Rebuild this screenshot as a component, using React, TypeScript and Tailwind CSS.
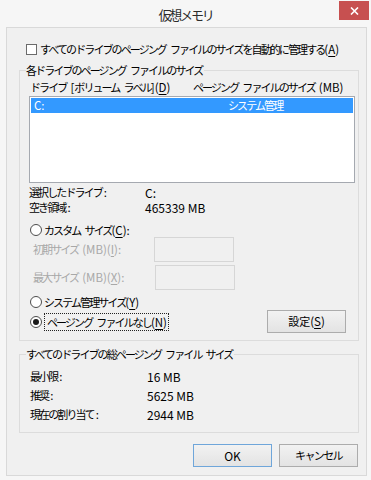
import React from "react";

// latin run: undo the tight CJK tracking
function L({ children }: { children: React.ReactNode }) {
  return <span className="text-[11.5px] tracking-normal">{children}</span>;
}

function Sp() {
  return <span className="inline-block w-[4px]" />;
}

function Colon() {
  return <span className="ml-[2px] text-[11.5px] tracking-normal">:</span>;
}

function Key({ k }: { k: string }) {
  return (
    <L>
      (<span className="underline underline-offset-2">{k}</span>)
    </L>
  );
}

function Radio({ checked }: { checked?: boolean }) {
  return (
    <span className="w-[12px] h-[12px] rounded-full border border-[#4d4d4d] bg-white flex items-center justify-center shrink-0">
      {checked && <span className="w-[6px] h-[6px] rounded-full bg-[#1a1a1a]" />}
    </span>
  );
}

function Btn({ children, primary }: { children: React.ReactNode; primary?: boolean }) {
  return (
    <div
      className={`w-[79px] h-[23px] flex items-center justify-center border bg-linear-to-b from-[#f2f2f2] to-[#e3e3e3] text-black ${
        primary ? "border-[#6fa6da]" : "border-[#acacac]"
      }`}
    >
      {children}
    </div>
  );
}

function Group({ label, children, className }: { label: React.ReactNode; children: React.ReactNode; className?: string }) {
  return (
    <div className={`relative border border-[#dcdcdc] ${className ?? ""}`}>
      <span className="absolute left-[6px] top-[-9px] h-[16px] leading-[16px] bg-[#f0f0f0] pr-[2px] text-black">
        {label}
      </span>
      {children}
    </div>
  );
}

export default function App() {
  return (
    <div className="w-[371px] h-[480px] bg-[#f6f6f6] flex flex-col font-['Noto_Sans_CJK_JP','Noto_Sans',sans-serif] text-[11px] tracking-[-1.9px] text-black whitespace-nowrap">
      {/* title bar */}
      <div className="relative h-[27px] flex items-center justify-center">
        <span className="text-[13px] tracking-[-2.2px] text-[#2b2b2b] leading-none mt-[1px]">仮想メモリ</span>
        <div className="absolute right-[2px] top-[1px] w-[30px] h-[19px] bg-[#c75050] flex items-center justify-center">
          <svg width="9" height="8" viewBox="0 0 9 8">
            <path d="M1 0.5 L8 7.5 M8 0.5 L1 7.5" stroke="#fff" strokeWidth="1.6" />
          </svg>
        </div>
      </div>

      {/* content */}
      <div className="ml-[6px] w-[361px] h-[449px] border border-[#d9d9d9] bg-[#f0f0f0] pl-[12px] pr-[7px] pt-[13px] flex flex-col">
        <div className="h-[16px] flex items-center ml-[7px]">
          <span className="w-[11px] h-[11px] border border-[#6b6b6b] bg-white shrink-0" />
          <span className="ml-[3px] leading-[16px]">
            すべてのドライブのページング
            <Sp />
            ファイルのサイズを自動的に管理する<Key k="A" />
          </span>
        </div>

        <Group
          label={
            <>
              各ドライブのページング
              <Sp />
              ファイルのサイズ
            </>
          }
          className="mt-[13px] pl-[9px] pr-[3px] pt-[8px] pb-[7px]"
        >
          <div className="h-[16px] flex items-center leading-[16px] ml-[1px]">
            <span className="w-[163px]">
              ドライブ
              <Sp />
              <L>[</L>ボリューム
              <Sp />
              ラベル<L>]</L>
              <Key k="D" />
            </span>
            <span>
              ページング
              <Sp />
              ファイルのサイズ
              <Sp />
              <L>(MB)</L>
            </span>
          </div>
          <div className="mt-[1px] h-[87px] border border-[#a5a9b0] bg-white p-[1px]">
            <div className="h-[15px] bg-[#3399ff] text-white flex items-center leading-[15px]">
              <span className="ml-[3px] w-[194px]">
                <L>C:</L>
              </span>
              <span>システム管理</span>
            </div>
          </div>

          <div className="mt-[2px] h-[15px] flex items-center leading-[15px]">
            <span className="w-[116px]">
              選択したドライブ
              <Colon />
            </span>
            <span className="text-[12px] tracking-normal">C:</span>
          </div>
          <div className="h-[15px] flex items-center leading-[15px]">
            <span className="w-[116px]">
              空き領域
              <Colon />
            </span>
            <span className="text-[12px] tracking-normal">465339 MB</span>
          </div>

          <div className="mt-[8px] h-[14px] flex items-center leading-[14px] ml-[1px]">
            <Radio />
            <span className="ml-[2px]">
              カスタム
              <Sp />
              サイズ<Key k="C" />
              <L>:</L>
            </span>
          </div>
          <div className="h-[25px] flex items-center text-[#a8a8a8] ml-[4px]">
            <span className="w-[121px]">
              初期サイズ
              <Sp />
              <L>(MB)</L>
              <Key k="I" />
              <L>:</L>
            </span>
            <span className="w-[80px] h-[25px] border border-[#d6d6d6] bg-[#f0f0f0]" />
          </div>
          <div className="mt-[3px] h-[25px] flex items-center text-[#a8a8a8] ml-[4px]">
            <span className="w-[122px]">
              最大サイズ
              <Sp />
              <L>(MB)</L>
              <Key k="X" />
              <L>:</L>
            </span>
            <span className="w-[80px] h-[25px] border border-[#d6d6d6] bg-[#f0f0f0]" />
          </div>

          <div className="mt-[4px] h-[16px] flex items-center leading-[16px] ml-[1px]">
            <Radio />
            <span className="ml-[2px]">
              システム管理サイズ<Key k="Y" />
            </span>
          </div>
          <div className="h-[23px] flex items-center justify-between">
            <div className="flex items-center ml-[1px]">
              <Radio checked />
              <span className="ml-[2px] pl-[2px] pr-[1px] h-[18px] leading-[16px] border border-dotted border-[#222]">
                ページング
                <Sp />
                ファイルなし<Key k="N" />
              </span>
            </div>
            <div className="mr-[9px]">
              <Btn>
                <span className="tracking-[0px]">設定</span>
                <Key k="S" />
              </Btn>
            </div>
          </div>
        </Group>

        <Group
          label={
            <>
              すべてのドライブの総ページング
              <Sp />
              ファイル
              <Sp />
              サイズ
            </>
          }
          className="mt-[13px] pl-[10px] pt-[12px] pb-[8px]"
        >
          {[
            ["最小限", "16 MB"],
            ["推奨", "5625 MB"],
            ["現在の割り当て", "2944 MB"],
          ].map(([k, v]) => (
            <div key={k} className="h-[19px] flex items-center leading-[19px]">
              <span className="w-[117px]">
                {k}
                <Colon />
              </span>
              <span className="text-[12px] tracking-normal">{v}</span>
            </div>
          ))}
        </Group>

        <div className="mt-[11px] flex justify-end gap-[7px] mr-[1px]">
          <Btn primary>
            <span className="text-[12px] tracking-normal">OK</span>
          </Btn>
          <Btn>
            <span className="tracking-[-1.6px]">キャンセル</span>
          </Btn>
        </div>
      </div>
    </div>
  );
}
